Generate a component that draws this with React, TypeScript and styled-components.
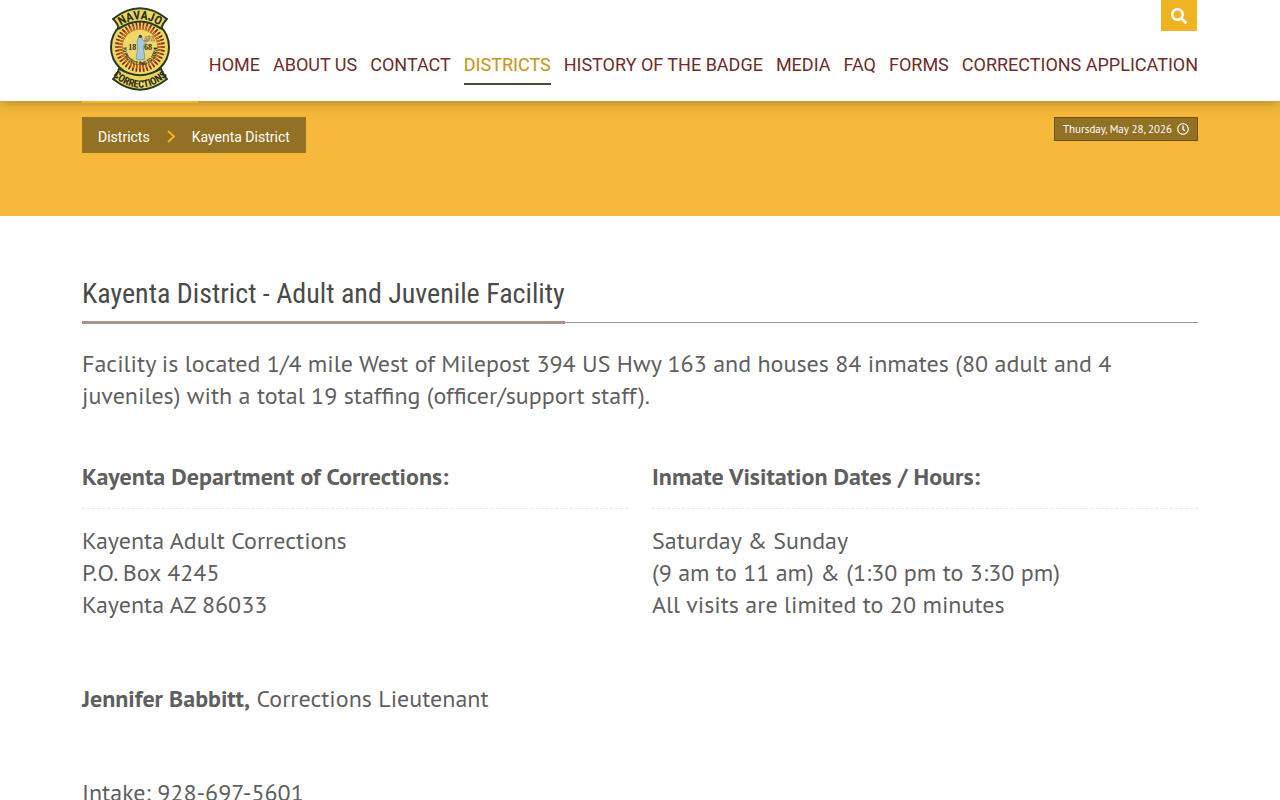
import React from "react";
import styled, { createGlobalStyle } from "styled-components";
import { FaSearch, FaRegClock } from "react-icons/fa";

const GlobalStyle = createGlobalStyle`
  *, *::before, *::after { box-sizing: border-box; }
  body {
    margin: 0;
    background: #fff;
    color: #5f5f5f;
    font-family: "PT Sans", "Noto Sans", sans-serif;
    font-size: 24px;
    line-height: 32px;
  }
  a { color: inherit; text-decoration: none; }
`;

const Container = styled.div`
  width: 100%;
  max-width: 1140px;
  margin: 0 auto;
  padding: 0 12px;
`;

const Header = styled.header`
  position: relative;
  z-index: 1;
  background: #fff;
  box-shadow: 0 0 12px rgba(0, 0, 0, 0.35);
`;

const HeaderRow = styled(Container)`
  display: flex;
  justify-content: space-between;
  height: 101px;
`;

const LogoLink = styled.a`
  position: relative;
  display: flex;
  flex-shrink: 0;
  justify-content: center;
  align-items: flex-start;
  width: 116px;
  padding-top: 7px;

  &::after {
    content: "";
    position: absolute;
    left: 0;
    right: 0;
    top: 100%;
    height: 2px;
    background: #f0b323;
  }
`;

const HeaderSide = styled.div`
  display: flex;
  flex-direction: column;
  align-items: flex-end;
  gap: 18px;
`;

const SearchButton = styled.button`
  display: flex;
  align-items: center;
  justify-content: center;
  width: 36px;
  height: 31px;
  margin-right: 1px;
  padding: 0;
  border: 0;
  background: #f0b323;
  color: #fff;
  font-size: 16px;
  cursor: pointer;
`;

const Nav = styled.nav`
  display: flex;
  gap: 13px;
`;

const NavLink = styled.a<{ $active?: boolean }>`
  height: 36px;
  border-bottom: 2px solid ${(p) => (p.$active ? "#46492f" : "transparent")};
  color: ${(p) => (p.$active ? "#b99a35" : "#6c2d2b")};
  text-shadow: ${(p) => (p.$active ? "0 0 3px rgba(240, 179, 35, 0.35)" : "none")};
  font-family: Roboto, sans-serif;
  font-size: 18px;
  line-height: 32px;
  white-space: nowrap;
`;

const Banner = styled.div`
  min-height: 115px;
  padding-top: 16px;
  background: #f5b83a;
`;

const BannerRow = styled(Container)`
  display: flex;
  justify-content: space-between;
  align-items: flex-start;
`;

const Breadcrumb = styled.nav`
  display: flex;
  align-items: center;
  gap: 17px;
  height: 36px;
  padding: 4px 16px 0;
  background: #927024;
  color: #fff;
  font-family: Roboto, sans-serif;
  font-size: 14px;
  line-height: 20px;

  svg { color: #f0b323; }
`;

const DateBadge = styled.time`
  display: flex;
  align-items: center;
  gap: 5px;
  height: 24px;
  padding: 0 8px;
  border: 1px solid #6f5115;
  background: #927024;
  color: #fff;
  font-size: 11px;
  line-height: 16px;
  white-space: nowrap;
`;

const Main = styled(Container).attrs({ as: "main" })`
  padding-top: 56px;
  padding-bottom: 32px;
`;

const TitleBar = styled.div`
  display: flex;
  margin-bottom: 24px;
  background: linear-gradient(#999, #999) 0 50px / 100% 1px no-repeat;
`;

const Title = styled.h1`
  margin: 0;
  padding: 6px 0 11px;
  border-bottom: 3px solid #a8948a;
  color: #4a4a4a;
  font-family: "Roboto Condensed", "Liberation Sans Narrow", sans-serif;
  font-size: 28px;
  font-weight: 400;
  line-height: 32px;
`;

const Paragraph = styled.p`
  margin: 0;
`;

const Columns = styled.div`
  display: grid;
  grid-template-columns: 1fr 1fr;
  gap: 24px;
  margin-top: 49px;
`;

const ColumnTitle = styled.h2`
  margin: 0 0 16px;
  padding-bottom: 15px;
  border-bottom: 1px dashed #e8e8e8;
  font-size: 24px;
  font-weight: 700;
  line-height: 32px;
`;

const Line = styled.span`
  display: block;
`;

const Contact = styled.p`
  margin: 62px 0 0;
`;

const rays = Array.from({ length: 40 }, (_, i) => i * 9);

function Seal() {
  return (
    <svg width="62" height="84" viewBox="25 20 186 252" role="img" aria-label="Navajo Corrections">
      <defs>
        <path id="seal-top" d="M50 84Q118 30 186 84" />
        <path id="seal-bottom" d="M36 226Q118 298 200 226" />
        <path id="seal-ring" d="M68 129A52 52 0 1 0 168 129" />
      </defs>
      <circle cx="118" cy="140" r="87" fill="#f0d560" stroke="#283c23" strokeWidth="6" />
      <g strokeLinecap="round">
        {rays.map((a) => (
          <g key={a} transform={`rotate(${a} 118 140)`}>
            <path d="M118 67V84" stroke="#6d2a1c" strokeWidth="5" />
            <path d="M118 77V86" stroke="#e0652b" strokeWidth="4" />
          </g>
        ))}
      </g>
      <circle cx="118" cy="140" r="53" fill="#f0d767" stroke="#8c7440" strokeWidth="2" />
      <g fill="#efd45f" stroke="#283c23" strokeWidth="6" strokeLinejoin="round">
        <path d="M37 56Q118 -8 199 56Q188 66 181 85Q118 42 55 85Q49 66 37 56Z" />
        <path d="M37 236Q118 300 199 236Q188 226 181 205Q118 244 55 205Q49 226 37 236Z" />
      </g>
      <path d="M117 105L123 107L124 116L131 123L148 112L149 116L130 132L128 143L133 176Q118 182 106 176L111 145L109 123Z" fill="#a9c8dd" stroke="#6484a0" strokeWidth="2" />
      <circle cx="119" cy="108" r="5" fill="#3a4650" />
      <path d="M145 105V122M135 109H157M135 109L131 122H141ZM157 109L151 122H162Z" fill="none" stroke="#ae642e" strokeWidth="2" />
      <g fill="#283018" fontFamily="Liberation Serif, serif" fontWeight="700" fontSize="24">
        <text x="83" y="150">18</text>
        <text x="130" y="150">68</text>
      </g>
      <g fill="#283018" textAnchor="middle" fontWeight="700">
        <text fontSize="15" fontFamily="Liberation Sans Narrow, Roboto Condensed, sans-serif">
          <textPath href="#seal-ring" startOffset="50%">TO PROTECT AND TO SERVE</textPath>
        </text>
        <text fontSize="36" fontFamily="Roboto Condensed, sans-serif">
          <textPath href="#seal-top" startOffset="50%">NAVAJO</textPath>
        </text>
        <text fontSize="31" fontFamily="Roboto Condensed, sans-serif">
          <textPath href="#seal-bottom" startOffset="50%">CORRECTIONS</textPath>
        </text>
      </g>
    </svg>
  );
}

const navItems = [
  "HOME",
  "ABOUT US",
  "CONTACT",
  "DISTRICTS",
  "HISTORY OF THE BADGE",
  "MEDIA",
  "FAQ",
  "FORMS",
  "CORRECTIONS APPLICATION",
];

export default function App() {
  return (
    <>
      <GlobalStyle />
      <Header>
        <HeaderRow>
          <LogoLink href="#home">
            <Seal />
          </LogoLink>
          <HeaderSide>
            <SearchButton type="button" aria-label="Search">
              <FaSearch />
            </SearchButton>
            <Nav aria-label="Main">
              {navItems.map((item) => (
                <NavLink
                  key={item}
                  href="#"
                  $active={item === "DISTRICTS"}
                  aria-current={item === "DISTRICTS" ? "page" : undefined}
                >
                  {item}
                </NavLink>
              ))}
            </Nav>
          </HeaderSide>
        </HeaderRow>
      </Header>
      <Banner>
        <BannerRow>
          <Breadcrumb aria-label="Breadcrumb">
            <a href="#districts">Districts</a>
            <svg width="8" height="14" viewBox="0 0 8 14" fill="none" stroke="currentColor" strokeWidth="2" aria-hidden="true">
              <path d="M1 1L7 6.500L1 12" />
            </svg>
            <a href="#kayenta">Kayenta District</a>
          </Breadcrumb>
          <DateBadge dateTime="2026-05-28">
            Thursday, May 28, 2026
            <FaRegClock size={12} />
          </DateBadge>
        </BannerRow>
      </Banner>
      <Main>
        <TitleBar>
          <Title>Kayenta District - Adult and Juvenile Facility</Title>
        </TitleBar>
        <Paragraph>
          Facility is located 1/4 mile West of Milepost 394 US Hwy 163 and houses 84 inmates (80
          adult and 4 juveniles) with a total 19 staffing (officer/support staff).
        </Paragraph>
        <Columns>
          <section>
            <ColumnTitle>Kayenta Department of Corrections:</ColumnTitle>
            <Line>Kayenta Adult Corrections</Line>
            <Line>P.O. Box 4245</Line>
            <Line>Kayenta AZ 86033</Line>
            <Contact>
              <strong>Jennifer Babbitt,</strong> Corrections Lieutenant
            </Contact>
            <Contact>Intake: 928-697-5601</Contact>
          </section>
          <section>
            <ColumnTitle>Inmate Visitation Dates / Hours:</ColumnTitle>
            <Line>Saturday &amp; Sunday</Line>
            <Line>(9 am to 11 am) &amp; (1:30 pm to 3:30 pm)</Line>
            <Line>All visits are limited to 20 minutes</Line>
          </section>
        </Columns>
      </Main>
    </>
  );
}
